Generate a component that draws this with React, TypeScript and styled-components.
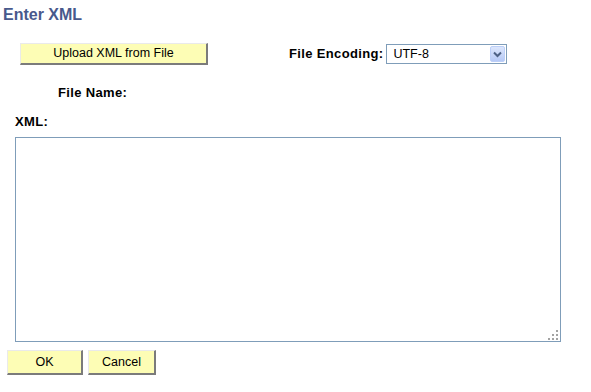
import React from "react";
import styled, { createGlobalStyle } from "styled-components";

const GlobalStyle = createGlobalStyle`
  html, body {
    margin: 0;
    padding: 0;
    background: #ffffff;
  }
  body {
    font-family: "Liberation Sans", Arial, sans-serif;
    font-size: 12px;
    color: #000000;
  }
`;

const Page = styled.div`
  width: 591px;
  height: 392px;
  padding-top: 6px;
  box-sizing: border-box;
`;

const Title = styled.h1`
  margin: 0 0 0 3px;
  font-size: 16px;
  line-height: 18px;
  font-weight: bold;
  color: #48598c;
`;

const TopRow = styled.div`
  display: flex;
  align-items: center;
  margin-top: 19px;
  padding-left: 20px;
  height: 22px;
`;

const PushButton = styled.button<{ $width: number; $height?: number }>`
  width: ${p => p.$width}px;
  height: ${p => p.$height ?? 22}px;
  box-sizing: border-box;
  margin: 0;
  padding: 0;
  background: #fdfdb5;
  border-style: solid;
  border-width: 1px 2px 2px 1px;
  border-color: #eaeaea #7b7b7b #7b7b7b #eaeaea;
  font-family: "Liberation Sans", Arial, sans-serif;
  font-size: 12.5px;
  color: #000000;
  line-height: 1;
  cursor: pointer;
`;

const EncodingGroup = styled.div`
  display: flex;
  align-items: center;
  margin-left: 81px;
  gap: 3px;
`;

const Label = styled.span<{ $indent?: number }>`
  display: block;
  font-weight: bold;
  font-size: 13px;
  line-height: 14px;
  letter-spacing: 0.35px;
  padding-left: ${p => p.$indent ?? 0}px;
`;

const Select = styled.div`
  position: relative;
  width: 121px;
  height: 20px;
  box-sizing: border-box;
  border: 1px solid #7f9db9;
  background: #ffffff;
  display: flex;
  align-items: center;
  padding-left: 6px;
  font-size: 12.5px;
`;

const SelectArrow = styled.span`
  position: absolute;
  top: 1px;
  right: 1px;
  width: 15px;
  height: 16px;
  box-sizing: border-box;
  border: 1px solid #bccff8;
  border-radius: 2px;
  background: linear-gradient(#dce6fc, #b6c9f6);
  display: flex;
  align-items: center;
  justify-content: center;
`;

const FileNameRow = styled.div`
  margin-top: 21px;
`;

const XmlRow = styled.div`
  margin-top: 15px;
`;

const EditorWrap = styled.div`
  position: relative;
  margin: 8px 0 0 15px;
  width: 546px;
  height: 205px;
`;

const XmlArea = styled.textarea`
  display: block;
  width: 100%;
  height: 100%;
  box-sizing: border-box;
  border: 1px solid #7f9db9;
  resize: none;
  outline: none;
  font-family: "Liberation Mono", monospace;
  font-size: 12px;
`;

const Grip = styled.svg`
  position: absolute;
  right: 3px;
  bottom: 2px;
`;

const ButtonBar = styled.div`
  display: flex;
  gap: 5px;
  margin: 8px 0 0 7px;
`;

const ChevronDown = () => (
  <svg width="9" height="7" viewBox="0 0 9 7">
    <path d="M1 1.5 L4.5 5 L8 1.5" fill="none" stroke="#4d6185" strokeWidth="2" />
  </svg>
);

const ResizeGrip = () => (
  <Grip width="10" height="10" viewBox="0 0 10 10">
    {[
      [8, 0],
      [4, 4],
      [8, 4],
      [0, 8],
      [4, 8],
      [8, 8],
    ].map(([x, y]) => (
      <rect key={`${x}-${y}`} x={x} y={y} width="2" height="2" fill="#a3a3a3" />
    ))}
  </Grip>
);

const App: React.FC = () => {
  return (
    <Page>
      <GlobalStyle />
      <Title>Enter XML</Title>
      <TopRow>
        <PushButton $width={188}>Upload XML from File</PushButton>
        <EncodingGroup>
          <Label>File Encoding:</Label>
          <Select>
            UTF-8
            <SelectArrow>
              <ChevronDown />
            </SelectArrow>
          </Select>
        </EncodingGroup>
      </TopRow>
      <FileNameRow>
        <Label $indent={58}>File Name:</Label>
      </FileNameRow>
      <XmlRow>
        <Label $indent={15}>XML:</Label>
      </XmlRow>
      <EditorWrap>
        <XmlArea spellCheck={false} />
        <ResizeGrip />
      </EditorWrap>
      <ButtonBar>
        <PushButton $width={76} $height={25}>
          OK
        </PushButton>
        <PushButton $width={68} $height={25}>
          Cancel
        </PushButton>
      </ButtonBar>
    </Page>
  );
};

export default App;
